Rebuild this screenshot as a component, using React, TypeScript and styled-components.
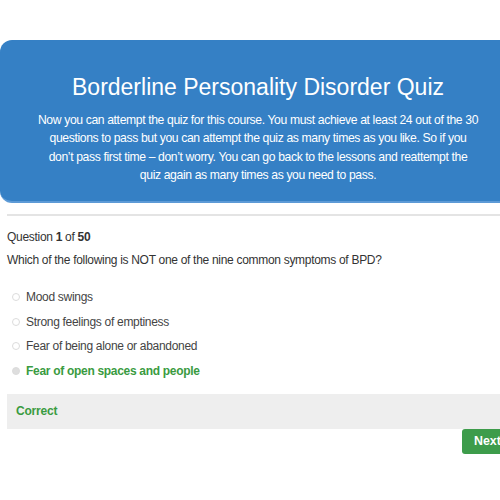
import React from "react";
import styled, { createGlobalStyle } from "styled-components";

const Global = createGlobalStyle`
  html, body { margin: 0; padding: 0; background: #fff; overflow: hidden; }
  body { font-family: "Liberation Sans", Arial, sans-serif; }
`;

const Page = styled.div`
  width: 516px;
  padding-top: 40px;
`;

const Hero = styled.section`
  background: #3580c5;
  border-radius: 12px;
  height: 163px;
  box-sizing: border-box;
  padding-top: 32px;
  color: #fff;
  text-align: center;
  border-bottom: 2px solid #5d9ad6;
`;

const Title = styled.h1`
  margin: 0 0 9px;
  font-size: 23px;
  font-weight: 400;
  line-height: 30px;
`;

const Intro = styled.p`
  margin: 0 auto;
  width: 480px;
  font-size: 12.2px;
  letter-spacing: -0.38px;
  line-height: 18.3px;
`;

const Body = styled.div`
  padding-left: 7px;
`;

const Divider = styled.hr`
  margin: 11px 0 0;
  border: 0;
  border-top: 2px solid #e4e4e4;
`;

const Text = styled.div`
  font-size: 12px;
  letter-spacing: -0.3px;
  line-height: 16px;
  color: #333;
`;

const Counter = styled(Text)`
  margin-top: 13px;
  b { font-weight: 700; }
`;

const Prompt = styled(Text)`
  margin-top: 7px;
`;

const Options = styled.ul`
  list-style: none;
  margin: 21px 0 0;
  padding: 0;
  display: flex;
  flex-direction: column;
  gap: 8.5px;
`;

const Option = styled.li<{ $correct?: boolean }>`
  display: flex;
  align-items: center;
  gap: 6px;
  height: 16px;
  font-size: 12px;
  letter-spacing: -0.3px;
  color: ${(p) => (p.$correct ? "#3a9b41" : "#444")};
  font-weight: ${(p) => (p.$correct ? 700 : 400)};
`;

const Radio = styled.span<{ $checked?: boolean }>`
  width: 6px;
  height: 6px;
  border-radius: 50%;
  border: 1px solid #dcdcdc;
  background: ${(p) => (p.$checked ? "#dedede" : "#fff")};
  margin-left: 5px;
  flex: none;
`;

const Result = styled.div`
  margin-top: 15px;
  height: 35px;
  background: #eeeeee;
  display: flex;
  align-items: center;
  padding-left: 9px;
  font-size: 12px;
  letter-spacing: -0.2px;
  font-weight: 700;
  color: #3a9b41;
`;

const Actions = styled.div`
  display: flex;
  padding-left: 455px;
`;

const NextButton = styled.button`
  height: 25px;
  padding: 0 12px;
  border: 0;
  border-radius: 3px;
  background: #3d9c4b;
  color: #fff;
  font-family: "Liberation Sans", Arial, sans-serif;
  font-weight: 700;
  font-size: 12.4px;
`;

const options = [
  "Mood swings",
  "Strong feelings of emptiness",
  "Fear of being alone or abandoned",
];

export default function App() {
  return (
    <>
      <Global />
      <Page>
        <Hero>
          <Title>Borderline Personality Disorder Quiz</Title>
          <Intro>
            Now you can attempt the quiz for this course. You must achieve at least 24 out of the 30
            <br />
            questions to pass but you can attempt the quiz as many times as you like. So if you
            <br />
            don’t pass first time – don’t worry. You can go back to the lessons and reattempt the
            <br />
            quiz again as many times as you need to pass.
          </Intro>
        </Hero>
        <Body>
          <Divider />
          <Counter>
            Question <b>1</b> of <b>50</b>
          </Counter>
          <Prompt>Which of the following is NOT one of the nine common symptoms of BPD?</Prompt>
          <Options>
            {options.map((o) => (
              <Option key={o}>
                <Radio />
                {o}
              </Option>
            ))}
            <Option $correct>
              <Radio $checked />
              Fear of open spaces and people
            </Option>
          </Options>
          <Result>Correct</Result>
          <Actions>
            <NextButton>Next</NextButton>
          </Actions>
        </Body>
      </Page>
    </>
  );
}
